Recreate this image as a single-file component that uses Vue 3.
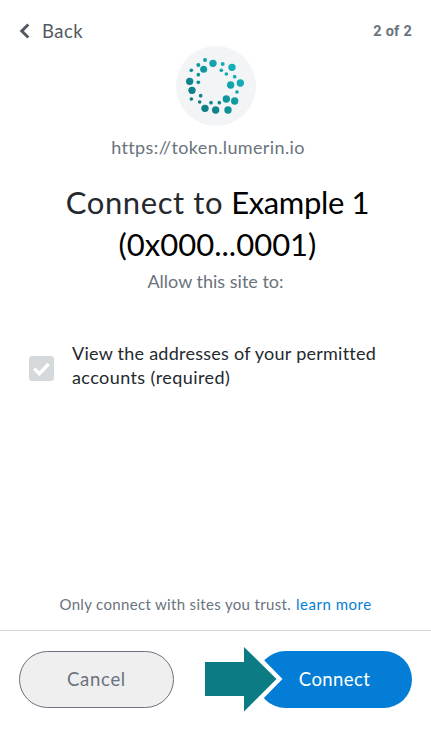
<template>
  <div class="popup">
    <header class="top-bar">
      <button class="back">
        <svg class="chevron" viewBox="0 0 11 16">
          <path d="M9.300 1.500 2.800 8l6.500 6.500" />
        </svg>
        <span class="back-label">Back</span>
      </button>
      <span class="step">2 of 2</span>
    </header>

    <main class="content">
      <svg class="site-logo" viewBox="18 18 240 240">
        <defs>
          <linearGradient id="teal" gradientUnits="userSpaceOnUse" x1="85" y1="200" x2="200" y2="100">
            <stop offset="0" stop-color="#0d7a80" />
            <stop offset="1" stop-color="#12b0b8" />
          </linearGradient>
        </defs>
        <circle cx="138" cy="138" r="120" fill="#f2f4f6" />
        <circle v-for="(d, i) in dots" :key="i" :cx="d[0]" :cy="d[1]" :r="d[2]" fill="url(#teal)" />
      </svg>
      <div class="origin">https://token.lumerin.io</div>

      <h1 class="title">
        <span class="line"><span class="lead">Connect to</span> <span class="account">Example 1</span></span>
        <span class="line address">(0x000...0001)</span>
      </h1>
      <p class="subtitle">Allow this site to:</p>

      <label class="permission">
        <span class="checkbox">
          <svg viewBox="0 0 25 25">
            <path d="M5.2 12.6l5.2 5.1 9.2-9.8" />
          </svg>
        </span>
        <span class="permission-text">
          <span class="perm-first">View the addresses of your permitted</span><br />
          <span class="perm-second">accounts (required)</span>
        </span>
      </label>
    </main>

    <p class="notice"><span class="trust">Only connect with sites you trust.</span><a class="more">learn more</a></p>

    <footer class="actions">
      <button class="btn cancel">Cancel</button>
      <button class="btn connect">Connect</button>
      <svg class="pointer" viewBox="0 0 80 76">
        <path d="M42 0v76L79.500 38z" fill="#fff" />
        <path d="M2 21h39V6l32.500 32-32.500 32.500V55H2z" fill="#0b7b84" />
      </svg>
    </footer>
  </div>
</template>

<script setup>
// x, y, radius of each dot in the site logo
const dots = [
  [105, 60, 6], [129, 70, 11], [158, 72, 6], [186, 82, 11],
  [85, 75, 6], [101, 88, 10.5], [64, 91, 5.5], [154, 91, 5.5],
  [85, 104, 5.5], [169, 102, 5.5], [194, 110, 5.5], [59, 124, 11],
  [85, 127, 5.5], [182, 135, 11], [211, 129, 11], [66, 151, 11],
  [201, 156, 5.5], [92, 167, 5.5], [64, 177, 5.5], [169, 177, 11],
  [194, 183, 11], [89, 186, 5.5], [123, 188, 5.5], [148, 188, 5.5],
  [105, 205, 11], [137, 210, 11], [174, 210, 11],
]
</script>

<style>
body {
  background: #fff;
}
</style>

<style scoped>
.popup {
  display: flex;
  flex-direction: column;
  box-sizing: border-box;
  width: 431px;
  height: 746px;
  overflow: hidden;
  font-family: Lato, "Open Sans", sans-serif;
  color: #24292e;
}

.popup * {
  white-space: nowrap;
}

button {
  font-family: inherit;
  margin: 0;
}

.top-bar {
  display: flex;
  justify-content: space-between;
  align-items: center;
  height: 46px;
  padding: 15px 19px 0;
  box-sizing: border-box;
}

.back {
  display: flex;
  align-items: center;
  gap: 12px;
  padding: 0;
  border: 0;
  background: none;
  color: #535a61;
  font-size: 18.5px;
  letter-spacing: 0.5px;
}

.chevron {
  width: 11px;
  height: 16px;
}

.chevron path {
  fill: none;
  stroke: #535a61;
  stroke-width: 3;
}

.step {
  font-family: Roboto, sans-serif;
  font-size: 14.5px;
  font-weight: 700;
  letter-spacing: 0.25px;
  color: #6a737d;
  padding-top: 1px;
}

.content {
  display: flex;
  flex-direction: column;
  align-items: center;
}

.site-logo {
  width: 80px;
  height: 80px;
}

.origin {
  margin-top: 8px;
  padding-right: 15px;
  font-size: 18px;
  line-height: 26px;
  letter-spacing: 0.38px;
  color: #6a737d;
}

.title {
  margin: 21px 0 0;
  padding-left: 4px;
  font-size: 31px;
  font-weight: 400;
  line-height: 42px;
  text-align: center;
}

.line {
  display: block;
}

.lead {
  letter-spacing: 0.6px;
}

.account {
  letter-spacing: -0.35px;
}

.account,
.address {
  color: #000;
}

.subtitle {
  margin: 3px 0 0;
  font-size: 18px;
  line-height: 26px;
  color: #6a737d;
}

.permission {
  display: flex;
  align-items: center;
  align-self: stretch;
  gap: 18px;
  margin-top: 47px;
  padding-left: 29px;
}

.checkbox {
  width: 25px;
  height: 25px;
  margin-top: 6px;
  border-radius: 3px;
  background: #d6d9dc;
}

.checkbox svg {
  display: block;
}

.checkbox path {
  fill: none;
  stroke: #fff;
  stroke-width: 3.4;
}

.permission-text {
  font-size: 18px;
  line-height: 24px;
}

.perm-first {
  letter-spacing: 0.25px;
}

.perm-second {
  letter-spacing: 0.42px;
}

.notice {
  display: flex;
  justify-content: center;
  gap: 5px;
  margin: auto 0 15px;
  font-size: 15px;
  line-height: 22px;
  letter-spacing: 0.33px;
  color: #6a737d;
}

.more {
  color: #037dd6;
  letter-spacing: 0.5px;
}

.actions {
  position: relative;
  display: flex;
  justify-content: space-between;
  height: 116px;
  padding: 20px 19px 0;
  border-top: 1px solid #d6d9dc;
  box-sizing: border-box;
}

.btn {
  width: 155px;
  height: 57px;
  padding: 0 0 2px;
  border-radius: 29px;
  font-size: 18.5px;
  letter-spacing: 0.4px;
}

.cancel {
  border: 1px solid #6a737d;
  background: #efefef;
  color: #6a737d;
  letter-spacing: 0.7px;
}

.connect {
  border: 0;
  background: #037dd6;
  color: #fff;
}

/* arrow lies over the left end of the connect button */
.pointer {
  position: absolute;
  left: 203px;
  top: 10px;
  width: 80px;
  height: 76px;
}
</style>
